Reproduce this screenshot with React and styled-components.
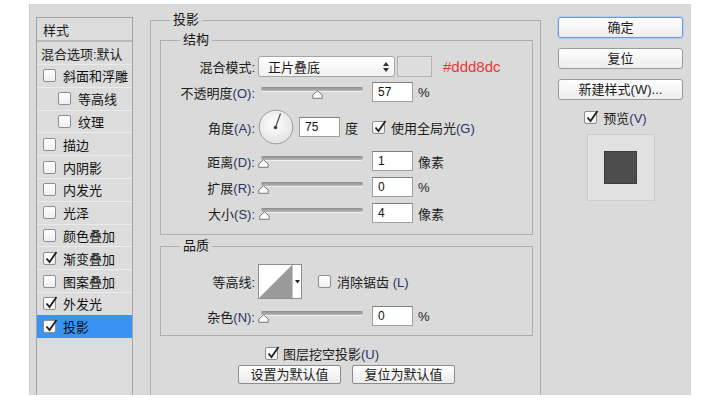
import styled, { createGlobalStyle } from 'styled-components';

const GlobalStyle = createGlobalStyle`
  html, body { margin: 0; padding: 0; background: #fff; }
  body {
    font-family: "Liberation Sans", "Noto Sans CJK SC", sans-serif;
    font-size: 13px;
    color: #1c1c1c;
  }
`;

const Dialog = styled.div`
  margin: 4px 0 0 29px;
  width: 662px;
  height: 391px;
  box-sizing: border-box;
  background: #dadada;
  border-left: 1px solid #c9c9c9;
  display: flex;
  overflow: hidden;
`;

/* ---------- left style list ---------- */
const Side = styled.div`
  padding: 13px 0 0 6px;
  width: 97px;
  flex: none;
`;

const StyleList = styled.div`
  height: 100%;
  box-sizing: border-box;
  border: 1px solid #a3a3a3;
  border-bottom: none;
  background: #dcdcdc;
`;

const ListHead = styled.div`
  height: 22px;
  display: flex;
  align-items: center;
  padding-left: 6px;
  border-bottom: 2px solid #bababa;
`;

const ListBlend = styled.div`
  height: 22px;
  display: flex;
  align-items: center;
  padding-left: 4px;
  white-space: nowrap;
`;

const ListRow = styled.div`
  height: 22.8px;
  box-sizing: border-box;
  display: flex;
  align-items: center;
  gap: 7px;
  padding-left: ${p => (p.$indent ? 21 : 6)}px;
  border-top: 1px solid ${p => (p.$active ? '#3a93f2' : '#ebebeb')};
  background: ${p => (p.$active ? '#3a93f2' : 'transparent')};
  color: #111;
`;

/* ---------- checkbox ---------- */
const Box = styled.span`
  position: relative;
  flex: none;
  width: 13px;
  height: 13px;
  box-sizing: border-box;
  border: 1px solid #8e8e8e;
  border-radius: 2px;
  background: linear-gradient(#ffffff, #efefef);
  margin-left: ${p => p.$ml || 0}px;
`;

const Tick = styled.svg`
  position: absolute;
  left: 1px;
  top: -2px;
  overflow: visible;
`;

const Check = ({ checked, ml }) => (
  <Box $ml={ml}>
    {checked && (
      <Tick width="12" height="13" viewBox="0 0 12 13">
        <path d="M1.5 7.5 L4.5 11 L11.5 1" fill="none" stroke="#1e1e1e" strokeWidth="1.8" strokeLinejoin="miter" />
      </Tick>
    )}
  </Box>
);

/* ---------- main column ---------- */
const Main = styled.div`
  width: 391px;
  flex: none;
  margin-left: 17px;
  padding-top: 8px;
`;

const Group = styled.fieldset`
  margin: ${p => p.$mt || 0}px 0 0 0;
  min-width: 0;
  box-sizing: border-box;
  border: 1px solid #afafaf;
  padding: ${p => p.$pad};
  min-height: ${p => p.$minh || 0}px;
`;

const Legend = styled.legend`
  margin-left: ${p => p.$ml}px;
  padding: 0 3px;
  line-height: 16px;
  font-size: 13px;
  color: #151515;
`;

const Row = styled.div`
  display: flex;
  align-items: center;
  height: ${p => p.$h || 20}px;
  margin-top: ${p => p.$mt || 0}px;
  white-space: nowrap;
`;

const Label = styled.div`
  width: 94px;
  flex: none;
  text-align: right;
  white-space: nowrap;
`;

const Hint = styled.span`
  color: #2c3460;
`;

const Text = styled.span`
  margin-left: ${p => p.$ml || 0}px;
  color: #1c1c1c;
`;

const SelectBox = styled.div`
  margin-left: 3px;
  width: 137px;
  height: 21px;
  box-sizing: border-box;
  border: 1px solid #a4a4a4;
  border-radius: 3px;
  background: linear-gradient(#ffffff, #f1f1f1);
  display: flex;
  align-items: center;
  justify-content: space-between;
  padding: 0 5px 0 9px;
`;

const Swatch = styled.div`
  margin-left: 2px;
  width: 35px;
  height: 21px;
  box-sizing: border-box;
  border: 1px solid #b4b4b4;
  background: #dddddd;
`;

const HexNote = styled.span`
  margin-left: 11px;
  font-family: "Liberation Sans", Arial, sans-serif;
  font-size: 15px;
  color: #e5383b;
`;

const NumInput = styled.input`
  margin-left: ${p => p.$ml || 0}px;
  width: 41px;
  height: 20px;
  box-sizing: border-box;
  border: 1px solid #a0a0a0;
  border-top-color: #7f7f7f;
  background: #fff;
  padding: 0 0 0 5px;
  font-family: "Liberation Sans", Arial, sans-serif;
  font-size: 12px;
  color: #111;
  outline: none;
`;

const SliderWrap = styled.div`
  position: relative;
  margin-left: 3px;
  width: 105px;
  height: 20px;
  flex: none;
`;

const Track = styled.div`
  position: absolute;
  left: 3px;
  right: 0;
  top: 5px;
  height: 4px;
  border-radius: 2px;
  background: linear-gradient(#8a8a8a, #b9b9b9);
  box-shadow: 0 1px 0 #efefef;
`;

const Thumb = styled.svg`
  position: absolute;
  top: 8px;
`;

const Slider = ({ pos }) => (
  <SliderWrap>
    <Track />
    <Thumb width="11" height="9" viewBox="0 0 11 9" style={{ left: `${pos * 94}px` }}>
      <path d="M5.5 0.8 L10.2 5 L10.2 8.3 L0.8 8.3 L0.8 5 Z" fill="#fbfbfb" stroke="#777" strokeWidth="1" />
    </Thumb>
  </SliderWrap>
);

const DialSvg = styled.svg`
  margin-left: 3px;
  flex: none;
`;

const Dial = () => (
  <DialSvg width="36" height="36" viewBox="0 0 36 36">
    <defs>
      <radialGradient id="dialFill" cx="45%" cy="40%" r="60%">
        <stop offset="0%" stopColor="#ffffff" />
        <stop offset="100%" stopColor="#e3e3e3" />
      </radialGradient>
    </defs>
    <circle cx="18" cy="18" r="16.8" fill="url(#dialFill)" stroke="#9b9b9b" strokeWidth="1" />
    <line x1="17.5" y1="18.5" x2="22.5" y2="4.5" stroke="#4a4a4a" strokeWidth="1.2" />
    <circle cx="17.5" cy="18.5" r="1.8" fill="#3e3e3e" />
  </DialSvg>
);

const ContourPick = styled.div`
  margin-left: 3px;
  display: flex;
  height: 35px;
  box-sizing: border-box;
  border: 1px solid #8d8d8d;
  background: #fff;
`;

const ContourArrow = styled.div`
  width: 8px;
  border-left: 1px solid #c9c9c9;
  display: flex;
  align-items: center;
  justify-content: center;
`;

const Contour = () => (
  <ContourPick>
    <svg width="33" height="33" viewBox="0 0 33 33">
      <polygon points="0,33 33,0 33,33" fill="#9a9a9a" />
    </svg>
    <ContourArrow>
      <svg width="5" height="4" viewBox="0 0 5 4">
        <polygon points="0,0 5,0 2.5,3.5" fill="#222" />
      </svg>
    </ContourArrow>
  </ContourPick>
);

const CheckRow = styled.div`
  display: flex;
  align-items: center;
  height: 16px;
  margin-top: 9px;
  padding-left: 105px;
  gap: 5px;
`;

const ButtonRow = styled.div`
  display: flex;
  justify-content: center;
  gap: 11px;
  margin-top: 4px;
`;

const SmallButton = styled.button`
  width: 103px;
  height: 19px;
  padding: 0;
  box-sizing: border-box;
  border: 1px solid #8c8c8c;
  border-radius: 2px;
  background: linear-gradient(#fdfdfd, #ebebeb);
  font-family: "Liberation Sans", "Noto Sans CJK SC", sans-serif;
  font-size: 13px;
  line-height: 17px;
  color: #1c1c1c;
`;

/* ---------- right column ---------- */
const Side2 = styled.div`
  margin-left: 17px;
  width: 125px;
  padding-top: 13px;
  display: flex;
  flex-direction: column;
  align-items: center;
`;

const Button = styled.button`
  width: 125px;
  height: 21px;
  padding: 0;
  margin-top: ${p => p.$mt || 0}px;
  box-sizing: border-box;
  border: 1px solid ${p => (p.$primary ? '#6c98d4' : '#9a9a9a')};
  box-shadow: ${p => (p.$primary ? '0 0 0 1px #b5cdee' : 'none')};
  border-radius: 3px;
  background: linear-gradient(#fefefe, #ededed);
  font-family: "Liberation Sans", "Noto Sans CJK SC", sans-serif;
  font-size: 13px;
  line-height: 19px;
  color: #1c1c1c;
`;

const PreviewCheck = styled.div`
  display: flex;
  align-items: center;
  gap: 6px;
  height: 14px;
  margin-top: 10px;
  margin-left: -10px;
`;

const PreviewBox = styled.div`
  margin-top: 10px;
  width: 68px;
  height: 67px;
  box-sizing: border-box;
  border: 1px solid #cdcdcd;
  background: #e1e1e1;
  display: flex;
  align-items: center;
  justify-content: center;
`;

const PreviewSquare = styled.div`
  width: 33px;
  height: 33px;
  box-sizing: border-box;
  border: 1px solid #3c3c3c;
  background: #4d4d4d;
`;

const layers = [
  { t: '斜面和浮雕' },
  { t: '等高线', indent: true },
  { t: '纹理', indent: true },
  { t: '描边' },
  { t: '内阴影' },
  { t: '内发光' },
  { t: '光泽' },
  { t: '颜色叠加' },
  { t: '渐变叠加', checked: true },
  { t: '图案叠加' },
  { t: '外发光', checked: true },
  { t: '投影', checked: true, active: true },
];

const UpDown = () => (
  <svg width="6" height="10" viewBox="0 0 6 10">
    <polygon points="3,0 6,4 0,4" fill="#333" />
    <polygon points="0,6 6,6 3,10" fill="#333" />
  </svg>
);

export default function App() {
  return (
    <>
      <GlobalStyle />
      <Dialog>
        <Side>
          <StyleList>
            <ListHead>样式</ListHead>
            <ListBlend>混合选项:默认</ListBlend>
            {layers.map(l => (
              <ListRow key={l.t} $indent={l.indent} $active={l.active}>
                <Check checked={l.checked} />
                <span>{l.t}</span>
              </ListRow>
            ))}
          </StyleList>
        </Side>

        <Main>
          <Group $pad="4px 7px 0 9px" $minh={420}>
            <Legend $ml={10}>投影</Legend>

            <Group $pad="8px 0 11px 0">
              <Legend $ml={19}>结构</Legend>
              <Row $h={21}>
                <Label>混合模式:</Label>
                <SelectBox>
                  <span>正片叠底</span>
                  <UpDown />
                </SelectBox>
                <Swatch />
                <HexNote>#ddd8dc</HexNote>
              </Row>
              <Row $mt={5}>
                <Label>不透明度<Hint>(O):</Hint></Label>
                <Slider pos={0.57} />
                <NumInput $ml={9} defaultValue="57" />
                <Text $ml={5}>%</Text>
              </Row>
              <Row $h={36} $mt={7}>
                <Label>角度<Hint>(A):</Hint></Label>
                <Dial />
                <NumInput $ml={5} defaultValue="75" />
                <Text $ml={5}>度</Text>
                <Check checked ml={14} />
                <Text $ml={6}>使用全局光<Hint>(G)</Hint></Text>
              </Row>
              <Row $mt={6}>
                <Label>距离<Hint>(D):</Hint></Label>
                <Slider pos={0} />
                <NumInput $ml={9} defaultValue="1" />
                <Text $ml={5}>像素</Text>
              </Row>
              <Row $mt={6}>
                <Label>扩展<Hint>(R):</Hint></Label>
                <Slider pos={0} />
                <NumInput $ml={9} defaultValue="0" />
                <Text $ml={5}>%</Text>
              </Row>
              <Row $mt={6}>
                <Label>大小<Hint>(S):</Hint></Label>
                <Slider pos={0.01} />
                <NumInput $ml={9} defaultValue="4" />
                <Text $ml={5}>像素</Text>
              </Row>
            </Group>

            <Group $mt={3} $pad="10px 0 9px 0">
              <Legend $ml={19}>品质</Legend>
              <Row $h={35}>
                <Label>等高线:</Label>
                <Contour />
                <Check ml={16} />
                <Text $ml={6}>消除锯齿 <Hint>(L)</Hint></Text>
              </Row>
              <Row $mt={7}>
                <Label>杂色<Hint>(N):</Hint></Label>
                <Slider pos={0} />
                <NumInput $ml={9} defaultValue="0" />
                <Text $ml={5}>%</Text>
              </Row>
            </Group>

            <CheckRow>
              <Check checked />
              <span>图层挖空投影<Hint>(U)</Hint></span>
            </CheckRow>
            <ButtonRow>
              <SmallButton>设置为默认值</SmallButton>
              <SmallButton>复位为默认值</SmallButton>
            </ButtonRow>
          </Group>
        </Main>

        <Side2>
          <Button $primary>确定</Button>
          <Button $mt={10}>复位</Button>
          <Button $mt={10}>新建样式(W)...</Button>
          <PreviewCheck>
            <Check checked />
            <span>预览<Hint>(V)</Hint></span>
          </PreviewCheck>
          <PreviewBox>
            <PreviewSquare />
          </PreviewBox>
        </Side2>
      </Dialog>
    </>
  );
}
